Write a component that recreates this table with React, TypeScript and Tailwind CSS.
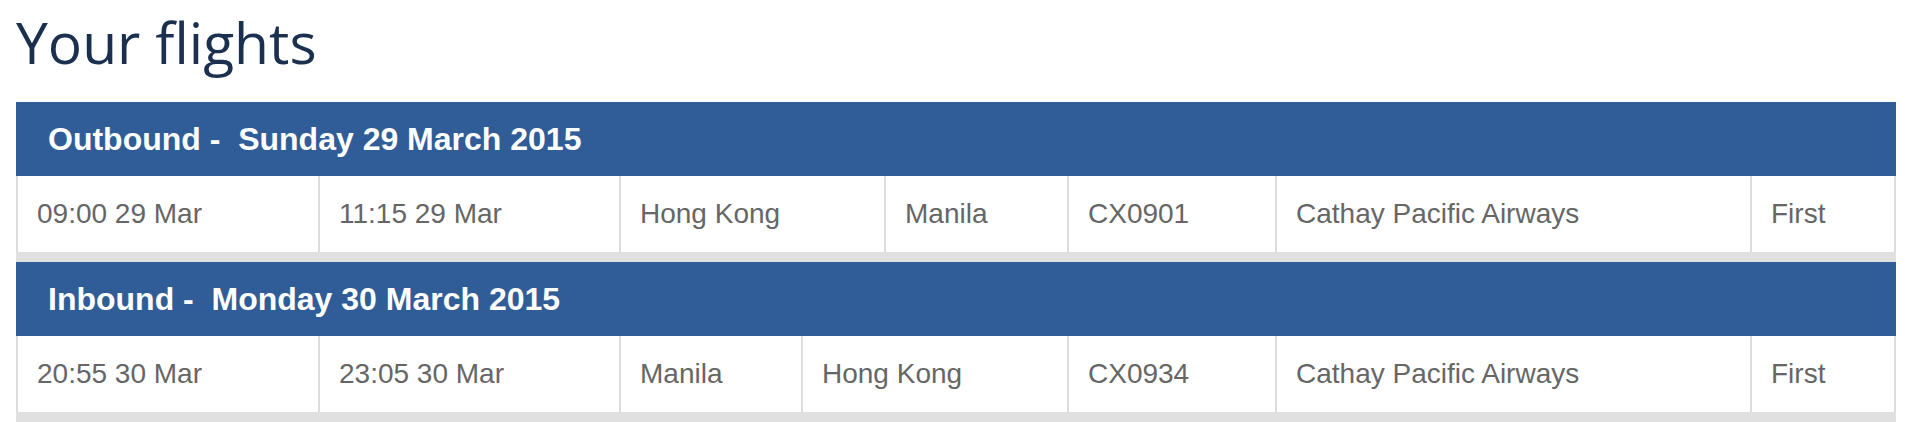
import React from "react";

const sections: { title: string; date: string; cells: string[]; cols: string }[] = [
  {
    title: "Outbound",
    date: "Sunday 29 March 2015",
    cells: ["09:00 29 Mar", "11:15 29 Mar", "Hong Kong", "Manila", "CX0901", "Cathay Pacific Airways", "First"],
    cols: "grid-cols-[302px_301px_265px_183px_208px_475px_146px]",
  },
  {
    title: "Inbound",
    date: "Monday 30 March 2015",
    cells: ["20:55 30 Mar", "23:05 30 Mar", "Manila", "Hong Kong", "CX0934", "Cathay Pacific Airways", "First"],
    cols: "grid-cols-[302px_301px_182px_266px_208px_475px_146px]",
  },
];

export default function App() {
  return (
    <div className="bg-white min-h-[422px] pl-[16px] pr-[22px] pt-[4px]">
      <h1
        className="h-[76px] leading-[76px] text-[57px] text-[#1b2f4f] font-normal mb-[22px]"
        style={{ fontFamily: '"Open Sans", sans-serif' }}
      >
        Your flights
      </h1>
      <div className="w-[1880px]" style={{ fontFamily: '"Liberation Sans", Arial, sans-serif' }}>
        {sections.map((s) => (
          <div key={s.title}>
            <div className="h-[74px] bg-[#305d97] flex items-center pl-[32px] text-white font-bold text-[32px]">
              {s.title} -{"\u00a0\u00a0"}{s.date}
            </div>
            <div className={`grid ${s.cols} h-[76px] bg-white`}>
              {s.cells.map((c, i) => (
                <div
                  key={i}
                  className={`flex items-center border-l-2 border-[#dddddd] pl-[19px] text-[28px] text-[#666666] ${
                    i === s.cells.length - 1 ? "border-r-2" : ""
                  }`}
                >
                  {c}
                </div>
              ))}
            </div>
            <div className="h-[10px] bg-[#e0e0e0]" />
          </div>
        ))}
      </div>
    </div>
  );
}
